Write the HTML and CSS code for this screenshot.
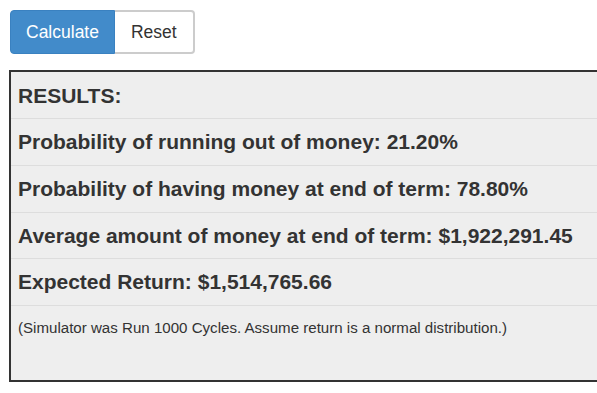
FILE: index.html
```html
<!DOCTYPE html>
<html>
<head>
<meta charset="utf-8">
<link rel="stylesheet" href="styles.css">
</head>
<body>
<div class="page">
  <div class="btn-group">
    <button class="btn btn-primary">Calculate</button>
    <button class="btn btn-default">Reset</button>
  </div>
  <div class="results">
    <div class="row head">RESULTS:</div>
    <div class="row">Probability of running out of money: 21.20%</div>
    <div class="row">Probability of having money at end of term: 78.80%</div>
    <div class="row">Average amount of money at end of term: $1,922,291.45</div>
    <div class="row">Expected Return: $1,514,765.66</div>
    <div class="row note">(Simulator was Run 1000 Cycles. Assume return is a normal distribution.)</div>
  </div>
</div>
</body>
</html>
```
FILE: styles.css
```css
html, body {
  margin: 0;
  padding: 0;
  background: #fff;
  overflow: hidden;
}
body {
  font-family: "Liberation Sans", Arial, sans-serif;
  color: #333;
}
.page {
  padding: 10px 0 0 9px;
}
.btn-group {
  display: flex;
  margin-left: 1px;
}
.btn {
  font-family: "Liberation Sans", Arial, sans-serif;
  font-size: 17.5px;
  line-height: 24px;
  padding: 9px 15px;
  border: 1px solid #ccc;
  background: #fff;
  color: #333;
  margin: 0;
  cursor: pointer;
}
.btn-primary {
  background: #428bca;
  border-color: #3a81c0;
  color: #fff;
  border-radius: 4px 0 0 4px;
}
.btn-default {
  border-radius: 0 4px 4px 0;
  border-width: 2px 2px 2px 0;
  padding: 8px 16px 8px 16px;
  border-color: #ccc;
}
.results {
  margin-top: 16px;
  width: 700px;
  background: #eee;
  border: 2px solid #333;
}
.row {
  font-size: 21px;
  font-weight: bold;
  line-height: 24px;
  padding: 11px 8px 10.7px 7px;
  border-top: 1px solid #ddd;
}
.row.head {
  border-top: none;
  padding-top: 11.7px;
}
.row.note {
  font-size: 15.1px;
  font-weight: normal;
  line-height: 20px;
  padding: 12px 7px 42px 7px;
}
```
